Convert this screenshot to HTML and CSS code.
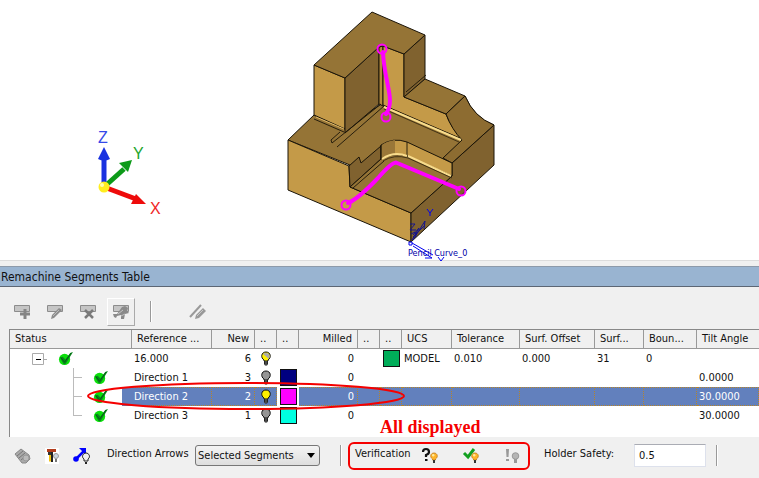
FILE: index.html
```html
<!DOCTYPE html>
<html lang="en">
<head>
<meta charset="utf-8">
<title>Remachine Segments Table</title>
<link rel="stylesheet" href="styles.css">
</head>
<body>
<svg width="0" height="0" class="defs" aria-hidden="true">
  <defs>
    <symbol id="tick" viewBox="0 0 16 16">
      <circle cx="7" cy="9" r="6" fill="#0be00b"/>
      <path d="M2 7l3-1 3 3 5-7 3-1-5 8-3 5-2 0z" fill="#078a1c"/>
      <path d="M3 7l4 5 7-10" fill="none" stroke="#075c14" stroke-width="1"/>
    </symbol>
    <symbol id="bulb" viewBox="0 0 12 15">
      <path d="M4 9C.5 7 1 1 6 1s5.500 6 2 8v1H4z" fill="currentColor" stroke="#111"/>
      <path d="M4 10h4v3l-1 1.500H5L4 13z" fill="#222"/>
      <path d="M5 11h2M5 13h2" stroke="#aaa" stroke-width=".6"/>
    </symbol>
    <symbol id="minibulb" viewBox="0 0 8 12">
      <path d="M2.500 7C-.5 5 .5 1 4 1s4.500 4 1.500 6v1h-3z" fill="currentColor" stroke="#c07a18" stroke-width=".8"/>
      <circle cx="3.200" cy="3.300" r="1.200" fill="#ffeaa0"/>
      <path d="M3 8h2v3H3z" fill="#333"/>
    </symbol>
  </defs>
</svg>

<main>
  <svg class="scene" viewBox="0 0 759 260" role="img" aria-label="Part model with pencil curves">
    <g stroke-width="5" fill="none">
      <path d="M104 187V158" stroke="#1932e0"/>
      <path d="M104 187L124 169" stroke="#0c9a18"/>
      <path d="M104 187L136 199" stroke="#ee0b0b"/>
    </g>
    <path d="M104 147l6 12q-6 3-12 0z" fill="#1932e0"/>
    <path d="M132 160l-4 12-9-9z" fill="#0c9a18"/>
    <path d="M146 204l-15 0 5-10z" fill="#ee0b0b"/>
    <circle cx="104" cy="187" r="5.500" fill="#ffee20"/>
    <circle cx="102" cy="185" r="2" fill="#ffffb0"/>
    <g class="axis">
      <text x="98" y="143" fill="#3549e8">Z</text>
      <text x="133" y="159" fill="#22a52c">Y</text>
      <text x="150" y="214" fill="#f02626">X</text>
    </g>

    <g stroke="#1a1408" stroke-width="1" stroke-linejoin="round">
      <path d="M288 140L314 115 345 129 381 104 446 114 465 96Q474 118 494 125L452 163 411 213 350 187V165z" fill="#957436"/>
      <path d="M288 140L349 166 350 187 411 213V242L288 190z" fill="#c49a48"/>
      <path d="M494 125V165L411 242V213L452 176V163z" fill="#80622f"/>
      <path d="M314 65L345 78V129L314 115z" fill="#c49a48"/>
      <path d="M345 78L379 47V104L345 133z" fill="#80622f"/>
      <path d="M379 47L383 46V106L379 104z" fill="#b48a3c"/>
      <path d="M383 46L404 54V97L446 114Q450 126 462 139L383 105z" fill="#c49a48"/>
      <path d="M404 54L425 35V79L404 97z" fill="#80622f"/>
      <path d="M404 97L425 79 465 96 446 114z" fill="#957436"/>
      <path d="M372 12L425 35 404 54 383 46 379 47 345 78 314 65z" fill="#957436"/>
      <path d="M446 114L465 96Q474 117 494 125L452 163 443 158 462 140Q452 130 446 114z" fill="#8d6c31"/>
      <path d="M349 166L359 157 361 163 381 146V159L350 187z" fill="#80622f"/>
      <path d="M381 145Q393 137 407 142L452 163V176L407 156Q393 152 381 159z" fill="#c49a48"/>
      <path d="M350 187L381 159Q393 152 407 156L452 176 411 213z" fill="#957436"/>
      <path d="M382 145Q387 141 395 140V154L382 158z" fill="#9a7738" stroke="none"/>
      <path d="M381 145V159M407 142V156M314 119L344 132M406 92L426 75M332 143L381 104M337 147L384 106M332 143L331 140 340 132M353 188L384 161" fill="none" stroke-width=".9"/>
    </g>
    <path d="M384 107L461 140M408 156L451 176M382 159Q394 151 407 156" fill="none" stroke="#f8dc8c" stroke-width="2"/>
    <path d="M316 117L344 129" stroke="#e3bb68"/>
    <path d="M384 109L459 142M408 158L452 178M383 161Q394 154 408 158" fill="none" stroke="#2b210c" stroke-width=".8"/>

    <g fill="none" stroke="#ff00ff" stroke-width="4" stroke-linecap="round" stroke-linejoin="round">
      <path d="M383 52C384 82 396 100 386 114"/>
      <path d="M348 203Q358 199 378 178 391 163 396 162.500L459 189"/>
      <g stroke-width="2">
        <circle cx="382" cy="49" r="4.500"/><circle cx="386" cy="117" r="4.500"/>
        <circle cx="346" cy="205" r="4.500"/><circle cx="461" cy="191" r="4.500"/>
      </g>
    </g>
    <g fill="none" stroke="#0000f0">
      <path d="M413 240L425 221 424 229M413 237L424 226M412 240L419 228 413 235M410 224h5l-5 6h6M411 234l4-2 1 5" stroke="#14148c"/>
      <path d="M427 209l3 4 3-4M430 213v3"/>
      <path d="M409 242h3v3h-3zM412 243L433 255M413 246L432 258l-7 0M438 257l3 4 3-4" />
    </g>
    <text class="curve-name" x="408" y="256">Pencil Curve_0</text>
  </svg>

  <section class="panel">
    <h1>Remachine Segments Table</h1>
    <div class="toolbar">
      <button aria-label="Add segment"><svg width="18" height="16"><path d="M1.500 1.500h15v6h-15z" fill="#c5c5c5" stroke="#8c8c8c"/><path d="M12 5v10M7 10h10" stroke="#858585" stroke-width="3"/></svg></button>
      <button aria-label="Edit segment"><svg width="18" height="16"><path d="M1.500 1.500h15v6h-15z" fill="#c5c5c5" stroke="#8c8c8c"/><path d="M5 15l1-4 7-7 3 2-8 8z" fill="#8c8c8c"/><path d="M7 12l6-6" stroke="#bbb"/></svg></button>
      <button aria-label="Delete segment"><svg width="18" height="16"><path d="M1.500 1.500h15v6h-15z" fill="#c5c5c5" stroke="#8c8c8c"/><path d="M6 6l8 8M14 6l-8 8" stroke="#7a7a7a" stroke-width="2.500"/></svg></button>
      <button class="raised" aria-label="Segment options"><svg width="18" height="16"><path d="M1.500 1.500h15v6h-15z" fill="#c5c5c5" stroke="#8c8c8c"/><path d="M1 10l4 0 5-7 3-1 3 2-1 3 2 2-4 1-1 5h-3l0-4-4 1-1 2-2-1z" fill="#8a8a8a"/><path d="M6 10l5-4M9 12l4-2" stroke="#c5c5c5"/></svg></button>
      <span class="divider"></span>
      <button class="lines" aria-label="Edit lines"><svg width="18" height="18"><path d="M1 14L12 2" stroke="#999" stroke-width="2"/><path d="M6 16l1-4 7-7 3 3-7 7z" fill="#999"/><path d="M8 13l6-6" stroke="#c8c8c8"/></svg></button>
    </div>

    <div class="grid">
      <table>
        <colgroup><col class="w-status"><col class="w-ref"><col class="w-new"><col class="w-icon"><col class="w-icon"><col class="w-milled"><col class="w-icon"><col class="w-icon"><col class="w-ucs"><col class="w-tol"><col class="w-offset"><col class="w-surf"><col class="w-bound"><col></colgroup>
        <thead>
          <tr><th>Status</th><th>Reference ...</th><th class="num">New</th><th>..</th><th>..</th><th class="num">Milled</th><th>..</th><th>..</th><th>UCS</th><th>Tolerance</th><th>Surf. Offset</th><th>Surf...</th><th>Boun...</th><th>Tilt Angle</th></tr>
        </thead>
        <tbody>
          <tr><td><div class="tree root"><svg width="16" height="13"><path d="M.5 1.500h11v11H.5zM12 7.500h3" fill="none" stroke="#aaa"/><path d="M4 7.500h5" stroke="#000"/></svg><svg class="tick"><use href="#tick"/></svg></div></td><td>16.000</td><td class="num">6</td><td class="icon half"><svg class="bulb"><use href="#bulb"/><path d="M3 3l6 5q2-6-3-6-2 0-3 1z" fill="#aaa"/></svg></td><td></td><td class="num">0</td><td></td><td class="icon"><span class="swatch green"></span></td><td>MODEL</td><td>0.010</td><td>0.000</td><td>31</td><td>0</td><td></td></tr>
          <tr><td><div class="tree branch"><svg width="9" height="19"><path d="M.5 0v19M0 9.500h9" stroke="#bbb"/></svg><svg class="tick"><use href="#tick"/></svg></div></td><td>Direction 1</td><td class="num">3</td><td class="icon off"><svg class="bulb"><use href="#bulb"/></svg></td><td class="icon"><span class="swatch navy"></span></td><td class="num">0</td><td></td><td></td><td></td><td></td><td></td><td></td><td></td><td>0.0000</td></tr>
          <tr class="selected"><td><div class="tree branch"><svg width="9" height="19"><path d="M.5 0v19M0 9.500h9" stroke="#bbb"/></svg><svg class="tick"><use href="#tick"/></svg></div></td><td>Direction 2</td><td class="num">2</td><td class="icon on"><svg class="bulb"><use href="#bulb"/></svg></td><td class="icon plain"><span class="swatch magenta"></span></td><td class="num">0</td><td></td><td></td><td></td><td></td><td></td><td></td><td></td><td>30.0000</td></tr>
          <tr><td><div class="tree branch"><svg width="9" height="19"><path d="M.5 0v10M0 9.500h9" stroke="#bbb"/></svg><svg class="tick"><use href="#tick"/></svg></div></td><td>Direction 3</td><td class="num">1</td><td class="icon off"><svg class="bulb"><use href="#bulb"/></svg></td><td class="icon"><span class="swatch cyan"></span></td><td class="num">0</td><td></td><td></td><td></td><td></td><td></td><td></td><td></td><td>30.0000</td></tr>
        </tbody>
      </table>
      <svg class="ring" width="322" height="30" viewBox="0 0 322 30" aria-hidden="true"><ellipse cx="160" cy="15" rx="158" ry="13" fill="none" stroke="#f50000" stroke-width="2"/></svg>
      <strong class="callout">All displayed</strong>
    </div>

    <footer>
      <button class="tool" aria-label="Show layers"><svg width="17" height="17"><path d="M1 7l6-5 8 6 1 4-4 4-4 0z" fill="#aaa" stroke="#888"/><path d="M3 9l6-5M5 11l6-5M7 13l6-5" stroke="#777"/><circle cx="12" cy="11" r="3" fill="#bbb" stroke="#999"/></svg></button>
      <button class="tool" aria-label="Show tool"><svg width="14" height="17"><path d="M0 1h14v16H0z" fill="#fff"/><path d="M2 2h9v3H2z" fill="#b23c1c"/><path d="M3 5h5v3H3z" fill="#333"/><path d="M4 8h2v6l-1 1-1-1z" fill="#f0c010"/><path d="M7 5v10" stroke="#222" stroke-width="2"/><circle cx="11" cy="9" r="2.500" fill="#ccd5df" stroke="#999"/><path d="M11 12v3" stroke="#777" stroke-width="2"/></svg></button>
      <button class="tool arrow" aria-label="Show directions"><svg width="18" height="17"><path d="M3 12L12 3" stroke="#0000ff" stroke-width="2.500"/><circle cx="3" cy="12" r="2.800" fill="#0000ff"/><path d="M6 1h7v7z" fill="#0000ff"/><path d="M11 12c-3-2-1-6 2-6s5 4 2 6v2h-4z" fill="#f0f0f0" stroke="#222"/><path d="M12 15h2v2h-2z" fill="#222"/></svg></button>
      <label class="caption directions" for="arrows">Direction Arrows</label>
      <span class="combo"><select id="arrows"><option>Selected Segments</option></select><svg width="8" height="5" aria-hidden="true"><path d="M0 0h8L4 5z"/></svg></span>
      <span class="divider"></span>
      <div class="verification" role="group" aria-labelledby="verify">
        <span class="caption" id="verify">Verification</span>
        <button aria-label="Unverified"><svg width="18" height="17"><path d="M2 5Q2 2 5 2t3 3q0 2-3 3v2" fill="none" stroke="#111" stroke-width="2.200"/><path d="M4 12h2.500v2H4z" fill="#111"/><use class="amber" href="#minibulb" x="9" y="5" width="8" height="12"/></svg></button>
        <button aria-label="Verified"><svg width="18" height="17"><path d="M2 6l4 4 6-8" fill="none" stroke="#12a020" stroke-width="3"/><use class="amber" href="#minibulb" x="9" y="5" width="8" height="12"/></svg></button>
        <button aria-label="Failed"><svg width="18" height="17"><path d="M3 2h3L5.500 10h-2z" fill="#999"/><path d="M3 12h3v2H3z" fill="#999"/><circle cx="12.500" cy="9" r="3.300" fill="#b5b5b5" stroke="#999"/><path d="M12.500 12v4" stroke="#999" stroke-width="3"/></svg></button>
      </div>
      <label class="caption holder" for="safety">Holder Safety:</label>
      <input id="safety" type="text" value="0.5">
      <span class="divider"></span>
    </footer>
  </section>
</main>
</body>
</html>
```

FILE: styles.css
```css
* { box-sizing: border-box; }

body {
  margin: 0;
  background: #fff;
  color: #111;
  font: 11px/14px "DejaVu Sans Condensed", "DejaVu Sans", sans-serif;
  overflow-x: hidden;
}

.defs { position: absolute; }

button {
  display: flex;
  align-items: center;
  justify-content: center;
  padding: 0;
  border: 0;
  background: none;
}

.scene { display: block; width: 100%; overflow: visible; }

.axis { font: 16px "Liberation Sans", sans-serif; }

.curve-name {
  font: 9px "DejaVu Sans Condensed", "DejaVu Sans", sans-serif;
  fill: #0000a8;
}

.panel {
  border-top: 1px solid #dcdcdc;
  padding-top: 5px;
  background: #f0f0f0;
  min-height: 218px;
}

h1 {
  margin: 0;
  padding: 1px 1px 0;
  border-top: 1px solid #8d9aaa;
  border-bottom: 1px solid #5c6674;
  background: #99b4d1;
  font-size: 12px;
  font-weight: 400;
  line-height: 18px;
}

.divider {
  width: 2px;
  height: 21px;
  border-left: 1px solid #999;
  border-right: 1px solid #fff;
}

.toolbar {
  display: flex;
  align-items: center;
  gap: 5px;
  height: 42px;
  padding: 7px 8px 0;
}

.toolbar button { width: 28px; height: 28px; }

.toolbar .raised {
  border: 1px solid;
  border-color: #fff #aaa #aaa #fff;
}

.toolbar .divider { margin: 0 27px 0 10px; }

.grid {
  position: relative;
  height: 108px;
  margin-left: 9px;
  border-top: 1px solid #888;
  border-left: 1px solid #888;
  background: #fff;
}

table {
  width: 100%;
  table-layout: fixed;
  border-collapse: separate;
  border-spacing: 0;
}

.w-status { width: 122px; }
.w-ref { width: 80px; }
.w-new { width: 43px; }
.w-icon { width: 22px; }
.w-milled { width: 59px; }
.w-ucs { width: 50px; }
.w-tol { width: 68px; }
.w-offset { width: 75px; }
.w-surf { width: 49px; }
.w-bound { width: 53px; }

th {
  height: 19px;
  padding: 0 5px;
  border-right: 1px solid #999;
  border-bottom: 1px solid #999;
  background: #f0f0f0;
  font-weight: 400;
  text-align: left;
  white-space: nowrap;
}

th:last-child { border-right: 0; }

td {
  height: 19px;
  padding: 0 2px;
  white-space: nowrap;
}

th.num { text-align: right; }
td.num { padding-right: 4px; text-align: right; }

.icon { text-align: center; }
.icon svg, .swatch { display: block; margin: 0 auto; }

.tree {
  display: flex;
  align-items: center;
  height: 19px;
}

.root { padding-left: 20px; gap: 10px; }
.branch { padding-left: 61px; gap: 11px; }

.tick { width: 15px; height: 15px; }
.bulb { width: 12px; height: 15px; }
.off { color: #959595; }
.on, .half { color: #fff000; }

.swatch {
  width: 17px;
  height: 17px;
  border: 1px solid #111;
}

.green { background: #00ad59; }
.navy { background: #000080; }
.magenta { background: #ff00ff; }
.cyan { background: #00ffe0; }

.selected td {
  border: 1px dotted #b5842a;
  border-left: 0;
  background: #6280bd;
  color: #fff;
  line-height: 13px;
}

.selected td.num { padding-right: 3px; }

.selected td:first-child {
  border: 0;
  background: linear-gradient(#6280bd, #6280bd) right / 10px 100% no-repeat;
}

.selected td.plain { border: 0; background: #fff; }
.selected td.icon { padding: 0; }
.selected td.on { color: #fff000; }

.ring {
  position: absolute;
  left: 76px;
  top: 51px;
}

.callout {
  position: absolute;
  left: 370px;
  top: 87px;
  color: #f50000;
  font: bold 18px/20px "Liberation Serif", serif;
}

footer {
  display: flex;
  align-items: center;
  height: 41px;
  padding-left: 13px;
  padding-bottom: 4px;
}

footer > * { flex: none; }

.tool { width: 18px; margin-right: 12px; }
.arrow { margin-right: 16px; }

.caption { padding-bottom: 4px; white-space: nowrap; }
.directions { width: 88px; }

.combo { position: relative; margin-right: 20px; }

.combo svg {
  position: absolute;
  right: 5px;
  top: 8px;
  pointer-events: none;
}

select {
  appearance: none;
  display: block;
  width: 125px;
  height: 21px;
  padding: 0 2px;
  border: 1px solid #777;
  border-radius: 3px;
  background: linear-gradient(#f4f4f4, #dedede);
  color: #111;
  font: inherit;
}

.verification {
  display: flex;
  align-items: center;
  width: 182px;
  height: 28px;
  margin: 0 14px 0 6px;
  padding-left: 5px;
  border: 2px solid #f50000;
  border-radius: 6px;
}

.verification .caption { width: 66px; }
.verification button { width: 18px; margin-right: 23px; }
.verification button:last-child { margin-right: 0; }
.amber { color: #ffb52a; }

.holder { width: 90px; }

input {
  width: 72px;
  height: 23px;
  margin-right: 10px;
  padding: 0 4px;
  border: 1px solid #dde1ec;
  border-top-color: #aaacb4;
  background: #fff;
  color: #111;
  font: inherit;
}
```
